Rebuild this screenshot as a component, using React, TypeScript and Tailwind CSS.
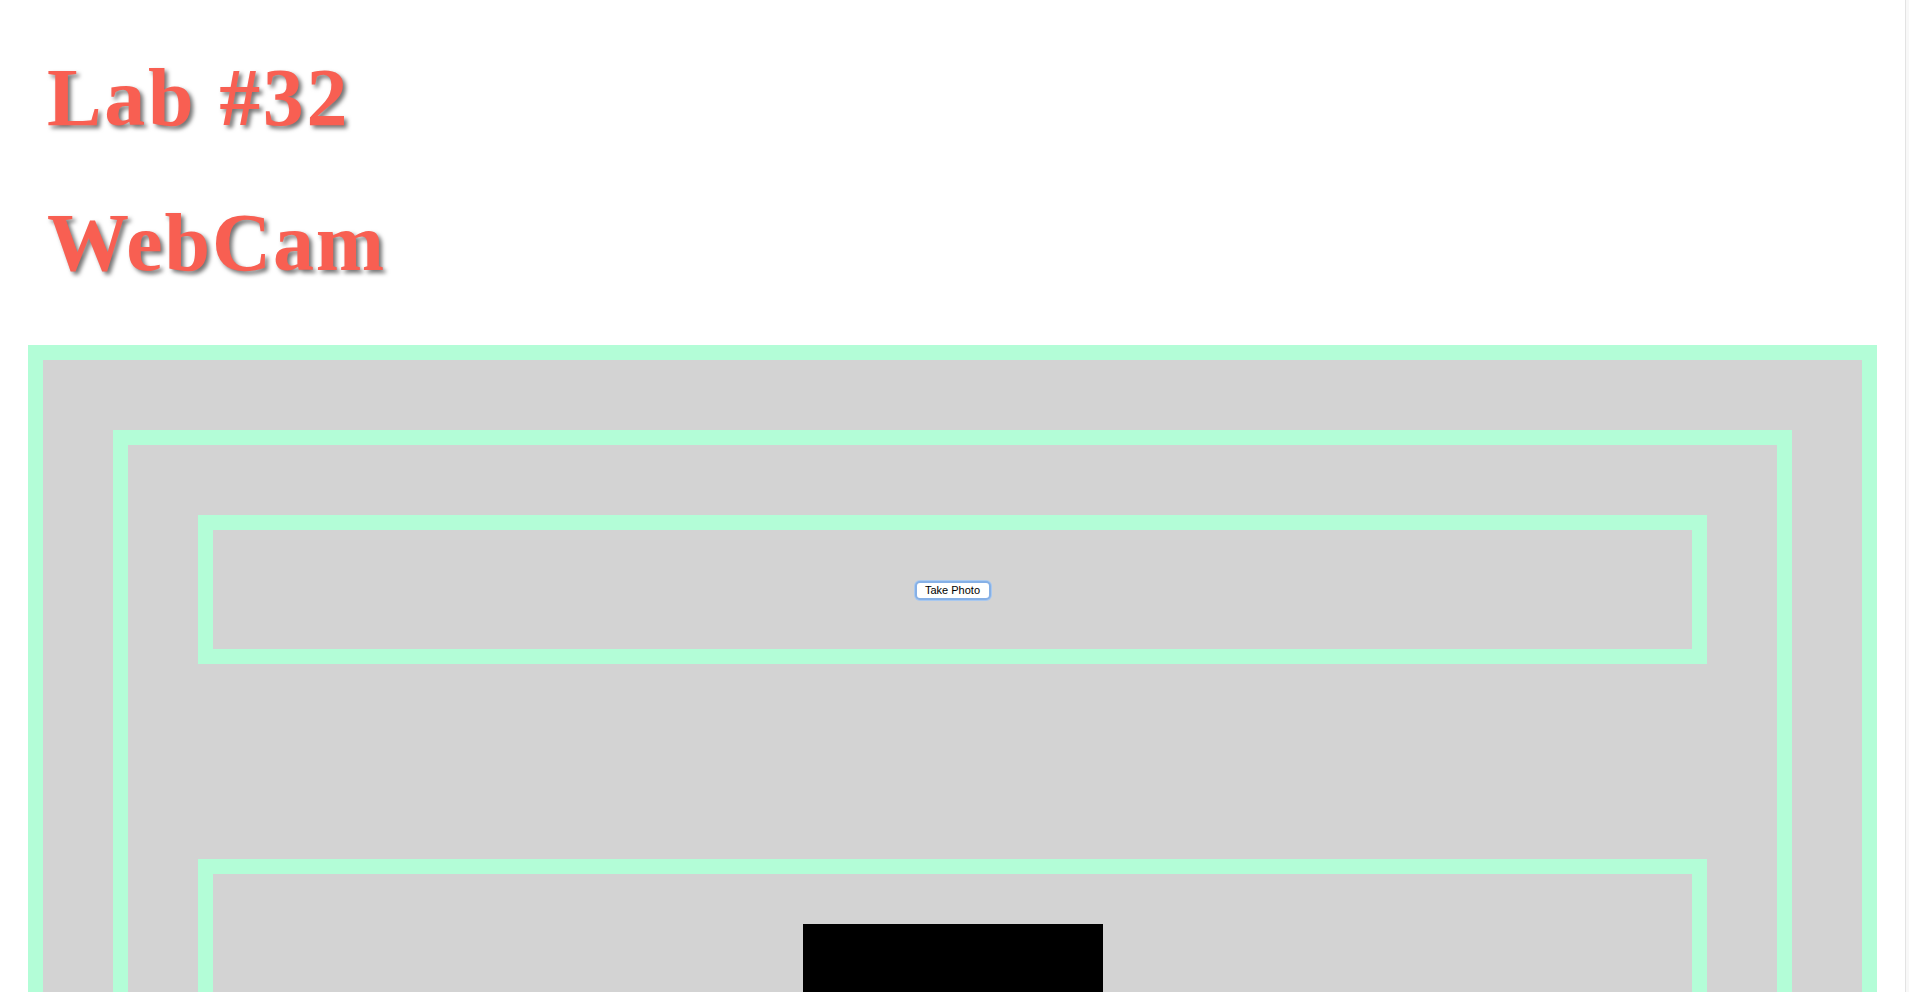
import React from "react";

const Box = ({ className = "", children }: { className?: string; children?: React.ReactNode }) => (
  <div className={`border-[15px] border-[#b3fdd7] bg-[#d3d3d3] ${className}`}>{children}</div>
);

const App = () => {
  return (
    <div className="flex h-screen overflow-hidden bg-white">
      <main className="flex-1 overflow-hidden">
        {/* Titles */}
        <div className="pl-[47px] pt-[52px] font-['Liberation_Serif',serif] text-[#f85f52] [text-shadow:3px_3px_4px_rgba(0,0,0,0.55)]">
          <h1 className="text-[82px] font-bold leading-[91px] tracking-[2.6px]">Lab #32</h1>
          <h1 className="mt-[54px] text-[82px] font-bold leading-[91px] tracking-[1.8px]">WebCam</h1>
        </div>

        {/* Nested frames */}
        <div className="mx-[28px] mt-[57px]">
          <Box className="p-[70px]">
            <Box className="p-[70px]">
              <Box className="flex h-[149px] items-center justify-center pt-[2px]">
                <button className="flex h-[19px] w-[76px] items-center justify-center rounded-[5px] border-2 border-[#86b0e6] bg-white font-['Liberation_Sans',sans-serif] text-[11px] text-black shadow-[0_0_0_1px_#a8c8ef]">
                  Take Photo
                </button>
              </Box>
              <Box className="mt-[195px] flex justify-center pt-[50px] pb-[50px]">
                <canvas width={300} height={150} className="block bg-black" />
              </Box>
            </Box>
          </Box>
        </div>
      </main>
      {/* scrollbar track */}
      <div className="w-[4px] shrink-0 border-l border-[#e3e3e3] bg-[#f8f8f8]" />
    </div>
  );
};

export default App;
